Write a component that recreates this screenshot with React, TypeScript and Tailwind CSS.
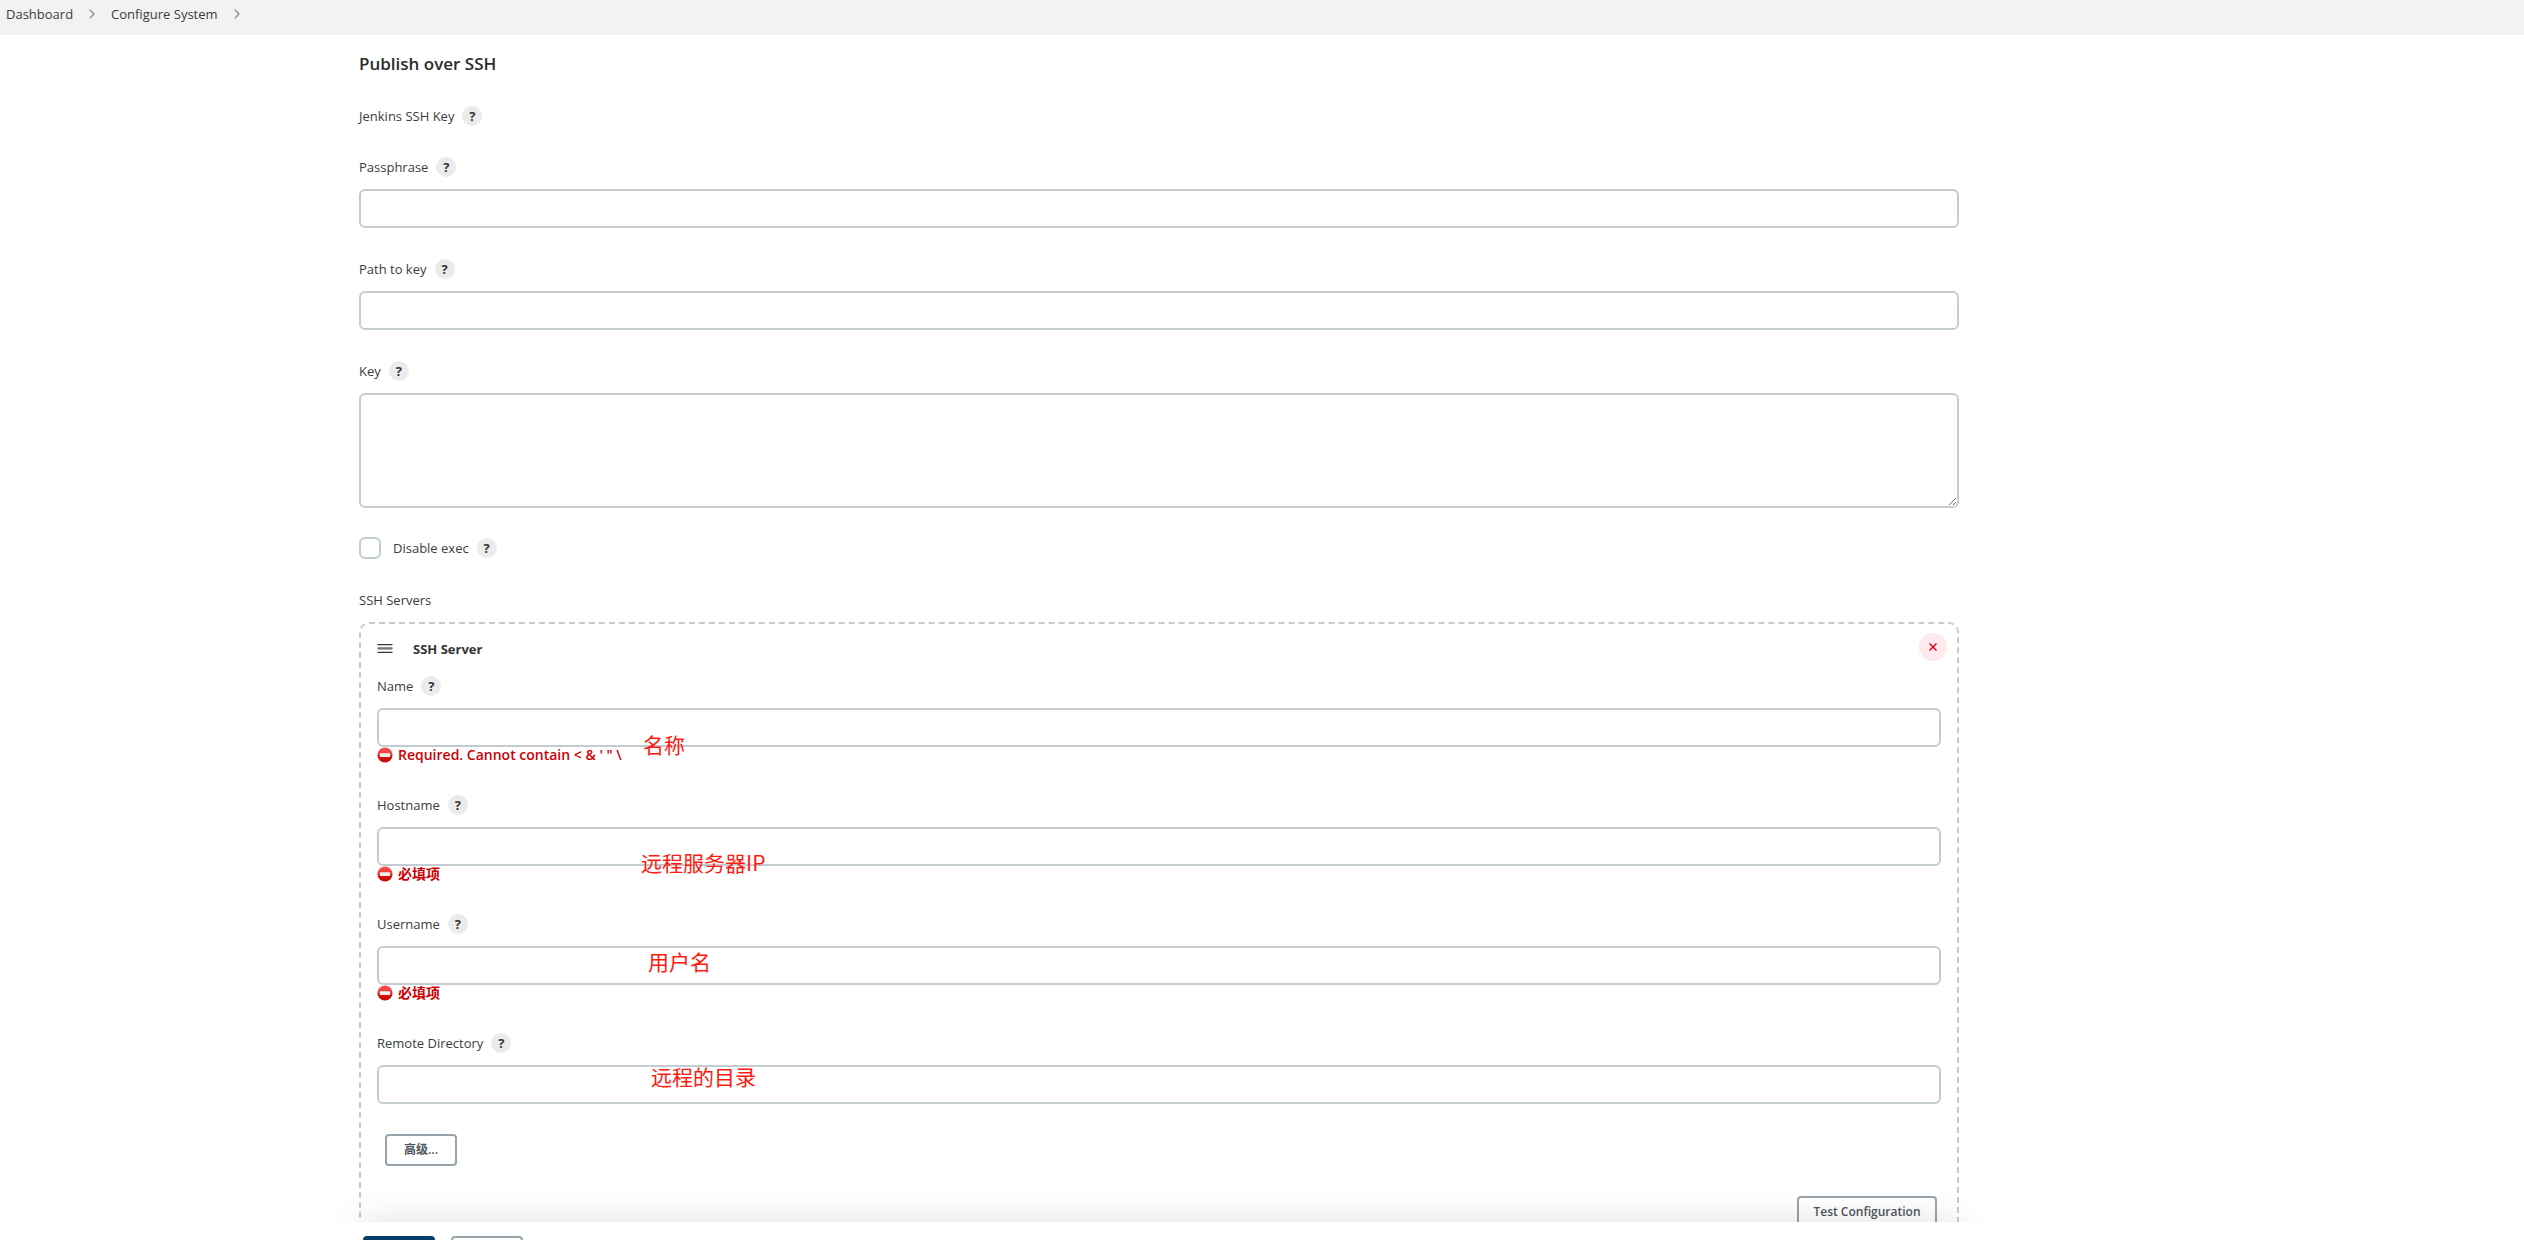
import { clsx } from "clsx";
import type { ReactNode } from "react";

const servers = [
  { id: "name", label: "Name", error: "Required. Cannot contain < & ' \" \\", note: "名称", notePos: "left-[266px] top-[26px]" },
  { id: "hostname", label: "Hostname", error: "必填项", note: "远程服务器IP", notePos: "left-[264px] top-[25px]" },
  { id: "username", label: "Username", error: "必填项", note: "用户名", notePos: "left-[271px] top-[5px]" },
  { id: "remote", label: "Remote Directory", note: "远程的目录", notePos: "left-[274px] top-[1px]" },
];

const inputClass =
  "block h-[39px] w-full rounded-md border-2 border-[#c3ccd1] bg-white px-2 outline-none focus:border-[#0b6aa2]";

function Chevron() {
  return (
    <svg viewBox="0 0 6 10" className="h-[10px] w-[6px]" fill="none" stroke="#858585" strokeWidth="1.2">
      <path d="M0.7 0.7 5 5 0.7 9.3" />
    </svg>
  );
}

function Help({ topic }: { topic: string }) {
  return (
    <button
      type="button"
      aria-label={`Help for feature: ${topic}`}
      className="flex h-5 w-5 items-center justify-center rounded-full bg-[#ebebeb] text-[13px] font-bold leading-5 text-[#333]"
    >
      ?
    </button>
  );
}

function StopIcon() {
  return (
    <svg viewBox="0 0 16 16" className="h-4 w-4 shrink-0">
      <defs>
        <linearGradient id="stop" x1="0" y1="0" x2="0" y2="1">
          <stop offset="0" stopColor="#f95050" />
          <stop offset="0.4" stopColor="#f04040" />
          <stop offset="0.6" stopColor="#d81414" />
          <stop offset="1" stopColor="#c00808" />
        </linearGradient>
      </defs>
      <circle cx="8" cy="8" r="7.6" fill="url(#stop)" />
      <rect x="2.8" y="6.3" width="10.4" height="3.6" rx="0.6" fill="#f1eeee" />
    </svg>
  );
}

function FieldLabel({ id, children }: { id?: string; children: string }) {
  return (
    <div className="flex h-5 items-center gap-2">
      <label htmlFor={id}>{children}</label>
      <Help topic={children} />
    </div>
  );
}

function Button({ className, children }: { className?: string; children: ReactNode }) {
  return (
    <button
      type="button"
      className={clsx(
        "h-8 shrink-0 rounded-sm border-2 border-[#98a4ac] bg-transparent text-xs font-semibold text-[#4d545d]",
        className,
      )}
    >
      {children}
    </button>
  );
}

export default function App() {
  return (
    <div className="flex h-screen flex-col overflow-hidden bg-white font-['Open_Sans','Noto_Sans_CJK_SC',sans-serif] text-[13px] leading-5 font-medium text-[#3c3c3c]">
      <nav className="flex h-[35px] shrink-0 bg-[#f2f2f2] pt-1 pl-[6px]">
        <ol className="flex h-5 items-center gap-4">
          <li><a href="#">Dashboard</a></li>
          <li aria-hidden="true"><Chevron /></li>
          <li><a href="#">Configure System</a></li>
          <li aria-hidden="true"><Chevron /></li>
        </ol>
      </nav>

      <main className="min-h-0 flex-1 overflow-y-auto pl-[359px] [scrollbar-width:none]">
        <form className="max-w-[1600px]">
          <h2 className="pt-[17px] text-[17px] leading-6 font-semibold text-[#2b2b2b]">Publish over SSH</h2>

          <div className="mt-[30px]">
            <FieldLabel>Jenkins SSH Key</FieldLabel>
          </div>

          <div className="mt-[31px] flex flex-col gap-3">
            <FieldLabel id="passphrase">Passphrase</FieldLabel>
            <input id="passphrase" type="password" className={inputClass} />
          </div>

          <div className="mt-[31px] flex flex-col gap-3">
            <FieldLabel id="path">Path to key</FieldLabel>
            <input id="path" type="text" className={inputClass} />
          </div>

          <div className="mt-[31px] flex flex-col gap-3">
            <FieldLabel id="key">Key</FieldLabel>
            <textarea
              id="key"
              className="block h-[115px] w-full resize-y rounded-md border-2 border-[#c3ccd1] px-2 outline-none focus:border-[#0b6aa2]"
            />
          </div>

          <div className="mt-[29px] flex h-[22px] items-center">
            <input
              id="disable-exec"
              type="checkbox"
              className="mr-3 h-[22px] w-[22px] appearance-none rounded-md border-2 border-[#c3ccd1] checked:bg-[#0b6aa2]"
            />
            <label htmlFor="disable-exec" className="mr-2">Disable exec</label>
            <Help topic="Disable exec" />
          </div>

          <h3 className="mt-[31px]">SSH Servers</h3>

          <section className="mt-3 rounded-[10px] border-2 border-dashed border-[#c3ccd1] px-4 pt-[9px] pb-12">
            <header className="flex h-7 items-center">
              <svg viewBox="0 0 16 9" className="mt-[2px] mr-5 h-[9px] w-4">
                <path d="M0.5 0h15v1.3h-15zM0.5 7.7h15V9h-15z" fill="#333" />
                <path d="M0.5 3.2h15v2.4h-15z" fill="#777" />
              </svg>
              <h4 className="mt-1 font-bold text-[#333]">SSH Server</h4>
              <button
                type="button"
                aria-label="Delete"
                className="-mr-[6px] ml-auto flex h-7 w-7 items-center justify-center rounded-full bg-[#fdeaec]"
              >
                <svg viewBox="0 0 8 8" className="h-2 w-2" stroke="#e6001f" strokeWidth="1.5">
                  <path d="M0.5 0.5l7 7M7.5 0.5l-7 7" />
                </svg>
              </button>
            </header>

            <div className="mt-[15px] flex flex-col gap-8">
              {servers.map((f) => (
                <div key={f.id}>
                  <FieldLabel id={f.id}>{f.label}</FieldLabel>
                  <div className="relative mt-3">
                    <input id={f.id} type="text" className={inputClass} />
                    <span
                      className={clsx(
                        "pointer-events-none absolute font-['Noto_Sans_CJK_SC',sans-serif] text-[21px] leading-[21px] font-normal text-[#ff1a10]",
                        f.notePos,
                      )}
                    >
                      {f.note}
                    </span>
                  </div>
                  {f.error && (
                    <p className="flex h-4 items-center gap-[5px] text-sm font-semibold text-[#cc0003]">
                      <StopIcon />
                      {f.error}
                    </p>
                  )}
                </div>
              ))}
            </div>

            <Button className="mt-[30px] ml-2 block w-[72px]">高级...</Button>
            <div className="mt-[30px] mr-1 flex justify-end">
              <Button className="w-[140px]">Test Configuration</Button>
            </div>
          </section>
        </form>
      </main>

      {/* save bar, only its top edge shows above the fold */}
      <footer className="relative h-[18px] shrink-0">
        <div className="absolute inset-x-0 top-0 h-16 pl-[359px]">
          <div className="h-full max-w-[1600px] shadow-[0_0_36px_rgba(0,0,0,0.12)]" />
        </div>
        <div className="relative flex h-16 gap-4 bg-white pt-[14px] pl-[363px]">
          <button type="button" aria-label="Save" className="h-8 w-[72px] rounded-sm bg-[#043f66]" />
          <button type="button" aria-label="Apply" className="h-8 w-[72px] rounded-sm border-2 border-[#98a4ac]" />
        </div>
      </footer>
    </div>
  );
}
